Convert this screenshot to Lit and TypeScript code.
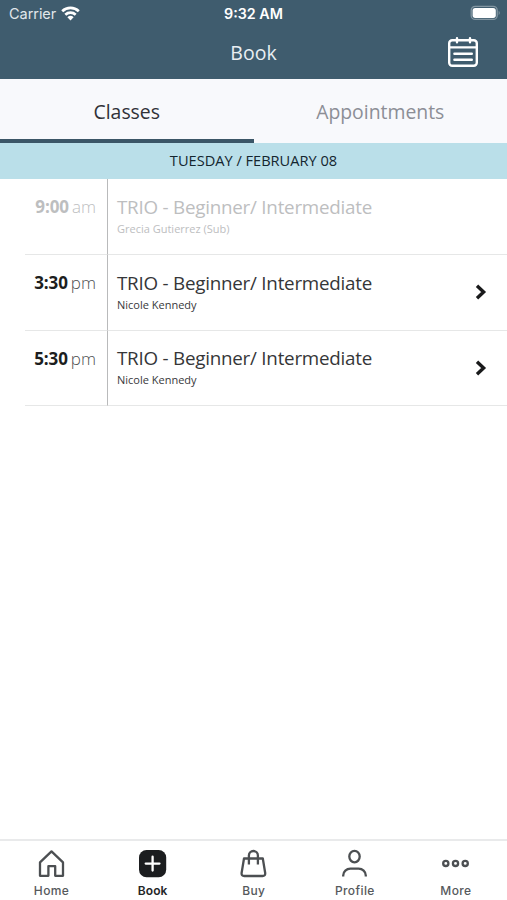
import { LitElement, html, css, svg } from "lit";
import { customElement, property } from "lit/decorators.js";
import { classMap } from "lit/directives/class-map.js";

interface Session {
  time: string;
  period: string;
  title: string;
  teacher: string;
  past?: boolean;
}

const sessions: Session[] = [
  { time: "9:00", period: "am", title: "TRIO - Beginner/ Intermediate", teacher: "Grecia Gutierrez (Sub)", past: true },
  { time: "3:30", period: "pm", title: "TRIO - Beginner/ Intermediate", teacher: "Nicole Kennedy" },
  { time: "5:30", period: "pm", title: "TRIO - Beginner/ Intermediate", teacher: "Nicole Kennedy" },
];

const navIcons: Record<string, unknown> = {
  Home: svg`<path d="M4 13.4 15.5 2.4 27 13.4V26.8H19.2V17.2H12.4V26.8H4Z"/>`,
  Book: svg`<rect class="solid" x="2" y="1" width="27.2" height="27.2" rx="7.5"/><path class="plus" d="M15.6 7.7V21.5M8.7 14.6H22.5"/>`,
  Buy: svg`<path d="M6 9.5H24.8L27.2 24Q27.4 27 24.6 27H6.2Q3.4 27 3.6 24Z"/><path d="M10.9 15.5V6.6A4.5 4.6 0 0 1 19.9 6.6V15.5"/>`,
  Profile: svg`<ellipse cx="15.5" cy="7.6" rx="5.2" ry="5.7"/><path d="M4.2 27.6V26.5A7.2 7 0 0 1 11.4 19.6H19.6A7.2 7 0 0 1 26.8 26.5V27.6"/>`,
  More: svg`<circle cx="5.8" cy="14.4" r="2.6"/><circle cx="15.5" cy="14.4" r="2.6"/><circle cx="25.2" cy="14.4" r="2.6"/>`,
};

@customElement("session-row")
class SessionRow extends LitElement {
  @property({ attribute: false }) session!: Session;

  static styles = css`
    :host { display: block; height: 75.8px; }
    .row { display: flex; height: 100%; }
    .time {
      box-sizing: border-box; width: 82px; margin-left: 25px; padding: 16px 11px 0 0;
      display: flex; justify-content: flex-end; gap: 3px;
      border-bottom: 1px solid #e6e7e7; font-size: 17px; line-height: 24px; color: #1c1e20;
    }
    .time b { font-weight: 700; letter-spacing: -0.1px; }
    .period { font-weight: 300; color: #4d4f51; }
    .body {
      box-sizing: border-box; flex: 1; display: flex; align-items: center; justify-content: space-between;
      border-left: 1px solid #b9babb; border-bottom: 1px solid #e6e7e7; padding: 0 20px 0 9px;
    }
    .text { align-self: flex-start; padding-top: 14.8px; }
    .title { font-size: 18.8px; line-height: 26px; letter-spacing: -0.23px; color: #353638; white-space: nowrap; }
    .teacher { font-size: 11px; line-height: 15px; margin-top: 1px; color: #38393b; }
    .past .time, .past .period, .past .title, .past .teacher { color: #bdbebf; }
    .arrow { width: 12px; height: 18px; fill: none; stroke: #191a1b; stroke-width: 3.4; }
  `;

  render() {
    const s = this.session;
    return html`<div class=${classMap({ row: true, past: !!s.past })}>
      <div class="time"><b>${s.time}</b><span class="period">${s.period}</span></div>
      <div class="body">
        <div class="text">
          <div class="title">${s.title}</div>
          <div class="teacher">${s.teacher}</div>
        </div>
        ${s.past ? "" : html`<svg class="arrow" viewBox="0 0 12 18"><path d="M2 2.8 8.6 9 2 15.2"/></svg>`}
      </div>
    </div>`;
  }
}

@customElement("app-root")
class AppRoot extends LitElement {
  static styles = css`
    :host {
      display: flex; flex-direction: column; width: 507px; height: 900px; overflow: hidden;
      background: #fff; font-family: "Open Sans", sans-serif;
    }
    .header { height: 79px; background: #3f5c6e; color: #fff; flex: none; }
    .status, .titlebar { display: grid; grid-template-columns: 1fr auto 1fr; align-items: center; }
    .status { height: 27px; font: 14.5px/18px Inter, sans-serif; }
    .carrier { display: flex; align-items: center; gap: 5px; padding-left: 9px; color: #e1e7eb; letter-spacing: -0.05px; }
    .wifi { width: 19px; height: 15px; margin-top: -1px; fill: none; stroke: #fff; stroke-width: 2.7; }
    .wifi .dot { fill: #fff; stroke: none; }
    .clock { font-weight: 600; font-size: 14.3px; }
    .battery { justify-self: end; margin-right: 6px; width: 31px; height: 16px; margin-top: -1px; }
    .titlebar { height: 51px; }
    .heading { grid-column: 2; font-size: 19.5px; line-height: 28px; color: #e9eef2; }
    .calendar { justify-self: end; margin-right: 28px; margin-top: -2px; width: 32px; height: 32px; fill: none; stroke: #fff; stroke-width: 2.4; stroke-linecap: round; }
    .tabs { display: flex; height: 64px; background: #f8f9fc; flex: none; }
    .tab {
      box-sizing: border-box; flex: 1; height: 64px; text-align: center; padding-top: 19px;
      font-size: 19.4px; line-height: 27px; color: #8c8e96;
    }
    .tab.on { color: #303238; border-bottom: 4px solid #3b5667; }
    .date {
      height: 36px; background: #badfe9; flex: none; text-align: center;
      font-size: 14.6px; line-height: 35px; color: #14262f;
    }
    .list { flex: 1; }
    .nav { display: flex; height: 59px; padding: 0 0.5px 0 1px; border-top: 2px solid #e9eaeb; flex: none; }
    .item {
      flex: 1; display: flex; flex-direction: column; align-items: center; padding-top: 8px;
      font: 500 12px/16px Inter, sans-serif; letter-spacing: 0.4px; color: #56595c;
    }
    .item.on { font-weight: 600; color: #242628; letter-spacing: 0.1px; }
    .icon { width: 31px; height: 30px; margin-bottom: 4px; fill: none; stroke: #4c4f52; stroke-width: 2.3; stroke-linejoin: round; }
    .icon .solid { fill: #1b1d1f; stroke: none; }
    .icon .plus { stroke: #fff; stroke-linecap: round; }
  `;

  render() {
    return html`
      <div class="header">
        <div class="status">
          <div class="carrier">Carrier
            <svg class="wifi" viewBox="0 0 19 15">
              <path d="M1.2 5.3A12 12 0 0 1 17.8 5.3M4.3 8.7A7.6 7.6 0 0 1 14.7 8.7"/>
              <path class="dot" d="M6.4 11.2A4.5 4.5 0 0 1 12.6 11.2L9.5 14.5Z"/>
            </svg>
          </div>
          <div class="clock">9:32 AM</div>
          <svg class="battery" viewBox="0 0 31 16">
            <rect x="1.2" y="1.4" width="26" height="13" rx="4" fill="none" stroke="#8396a2" stroke-width="1.3"/>
            <rect x="2.6" y="2.9" width="23.2" height="10" rx="2.6" fill="#fff"/>
            <path d="M28.7 5.8Q30.8 8 28.7 10.2Z" fill="#8396a2"/>
          </svg>
        </div>
        <div class="titlebar">
          <div class="heading">Book</div>
          <svg class="calendar" viewBox="0 0 32 32">
            <rect x="2.2" y="4.2" width="27.6" height="25.6" rx="3"/>
            <path d="M2.2 11.4H29.8M10 2.2V6.2M23 2.2V6.2M7.4 17.7H24.8M7.4 23.7H24.8"/>
          </svg>
        </div>
      </div>
      <div class="tabs">
        <div class="tab on">Classes</div>
        <div class="tab">Appointments</div>
      </div>
      <div class="date">TUESDAY / FEBRUARY 08</div>
      <div class="list">${sessions.map((s) => html`<session-row .session=${s}></session-row>`)}</div>
      <div class="nav">
        ${Object.entries(navIcons).map(([name, icon]) => html`
          <div class=${classMap({ item: true, on: name === "Book" })}>
            <svg class="icon" viewBox="0 0 31 30">${icon}</svg>${name}
          </div>`)}
      </div>`;
  }
}
